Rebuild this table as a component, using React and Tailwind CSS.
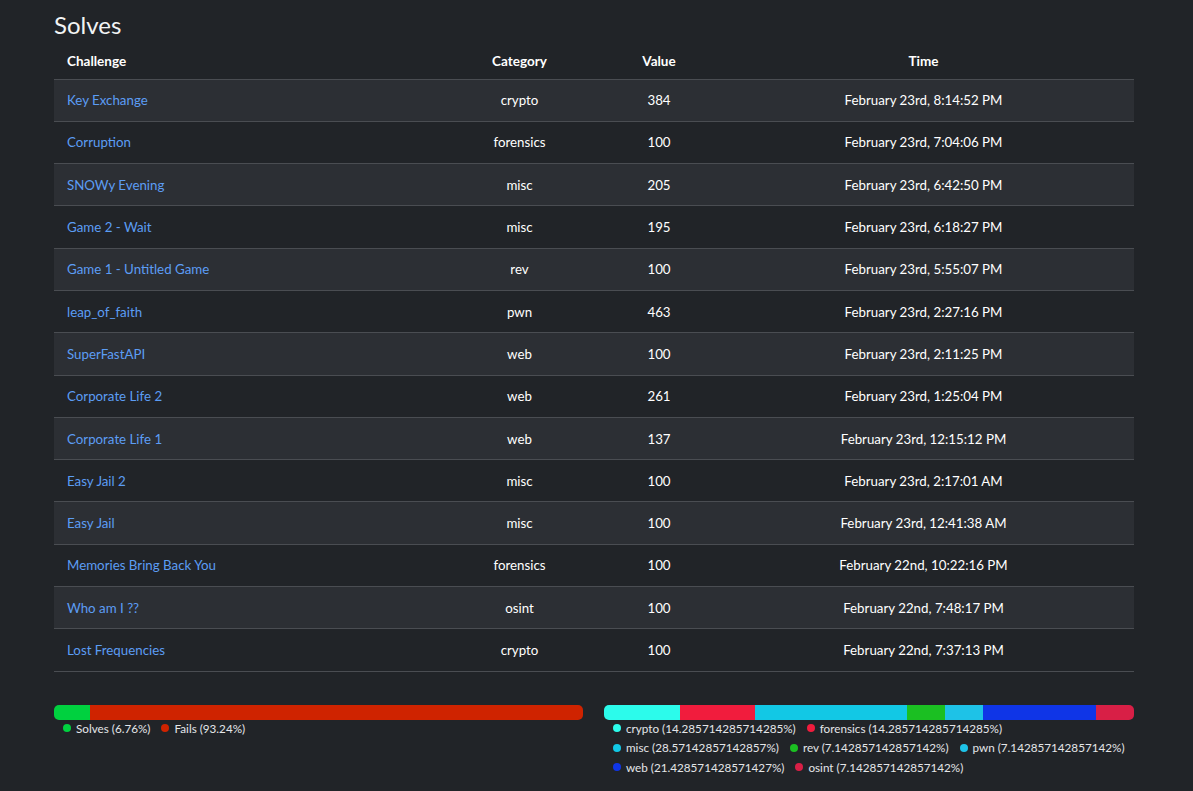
import React from 'react';

const SOLVES = [
  { name: 'Key Exchange', category: 'crypto', value: 384, time: 'February 23rd, 8:14:52 PM' },
  { name: 'Corruption', category: 'forensics', value: 100, time: 'February 23rd, 7:04:06 PM' },
  { name: 'SNOWy Evening', category: 'misc', value: 205, time: 'February 23rd, 6:42:50 PM' },
  { name: 'Game 2 - Wait', category: 'misc', value: 195, time: 'February 23rd, 6:18:27 PM' },
  { name: 'Game 1 - Untitled Game', category: 'rev', value: 100, time: 'February 23rd, 5:55:07 PM' },
  { name: 'leap_of_faith', category: 'pwn', value: 463, time: 'February 23rd, 2:27:16 PM' },
  { name: 'SuperFastAPI', category: 'web', value: 100, time: 'February 23rd, 2:11:25 PM' },
  { name: 'Corporate Life 2', category: 'web', value: 261, time: 'February 23rd, 1:25:04 PM' },
  { name: 'Corporate Life 1', category: 'web', value: 137, time: 'February 23rd, 12:15:12 PM' },
  { name: 'Easy Jail 2', category: 'misc', value: 100, time: 'February 23rd, 2:17:01 AM' },
  { name: 'Easy Jail', category: 'misc', value: 100, time: 'February 23rd, 12:41:38 AM' },
  { name: 'Memories Bring Back You', category: 'forensics', value: 100, time: 'February 22nd, 10:22:16 PM' },
  { name: 'Who am I ??', category: 'osint', value: 100, time: 'February 22nd, 7:48:17 PM' },
  { name: 'Lost Frequencies', category: 'crypto', value: 100, time: 'February 22nd, 7:37:13 PM' },
];

const SOLVE_RATIO = [
  { label: 'Solves (6.76%)', pct: 6.76, color: '#00d13f' },
  { label: 'Fails (93.24%)', pct: 93.24, color: '#cf2300' },
];

const CATEGORIES = [
  { label: 'crypto (14.285714285714285%)', pct: 14.285714285714285, color: '#2cfbeb' },
  { label: 'forensics (14.285714285714285%)', pct: 14.285714285714285, color: '#f11c3d' },
  { label: 'misc (28.57142857142857%)', pct: 28.57142857142857, color: '#12c8e5' },
  { label: 'rev (7.142857142857142%)', pct: 7.142857142857142, color: '#1bbf22' },
  { label: 'pwn (7.142857142857142%)', pct: 7.142857142857142, color: '#1ec2e7' },
  { label: 'web (21.428571428571427%)', pct: 21.428571428571427, color: '#0f35e7' },
  { label: 'osint (7.142857142857142%)', pct: 7.142857142857142, color: '#d81f46' },
];

function StackedBar({ parts }) {
  return (
    <div>
      <div className="flex h-[15px] w-full overflow-hidden rounded-[5px]">
        {parts.map((p) => (
          <div key={p.label} className="h-full" style={{ width: `${p.pct}%`, backgroundColor: p.color }} />
        ))}
      </div>
      <div className="-mt-[1px] flex flex-wrap gap-x-[11px] pl-[9px] text-[11.7px] leading-[19.5px] text-[#e4e6e8]">
        {parts.map((p) => (
          <div key={p.label} className="flex items-center gap-[5px]">
            <span className="inline-block h-[8px] w-[8px] rounded-full" style={{ backgroundColor: p.color }} />
            <span>{p.label}</span>
          </div>
        ))}
      </div>
    </div>
  );
}

export default function App() {
  return (
    <div
      className="min-h-[791px] bg-[#212428] pt-[10px] text-white"
      style={{ fontFamily: 'Lato, "Open Sans", sans-serif' }}
    >
      <div className="ml-[54px] w-[1080px]">
        <h1 className="text-[24px] leading-[29px] font-normal text-[#f2f3f4]">Solves</h1>

        {/* solves table */}
        <table className="w-full border-collapse text-[13.3px]">
          <thead>
            <tr className="h-[40px] border-b border-[#4a4d52] text-[13.5px] font-bold">
              <th className="w-[380px] pt-[4px] pr-3 pl-[13px] text-left">Challenge</th>
              <th className="w-[171px] px-3 pt-[4px] text-center">Category</th>
              <th className="w-[108px] px-3 pt-[4px] text-center">Value</th>
              <th className="px-3 pt-[4px] text-center">Time</th>
            </tr>
          </thead>
          <tbody>
            {SOLVES.map((s, i) => (
              <tr
                key={s.name}
                className={`h-[42.3px] border-b border-[#4a4d52] ${i % 2 === 0 ? 'bg-[#2c2f34]' : ''}`}
              >
                <td className="pt-[2px] pr-3 pl-[13px] text-[#5c9df4]">{s.name}</td>
                <td className="px-3 pt-[2px] text-center">{s.category}</td>
                <td className="px-3 pt-[2px] text-center">{s.value}</td>
                <td className="px-3 pt-[2px] text-center">{s.time}</td>
              </tr>
            ))}
          </tbody>
        </table>

        {/* stats bars */}
        <div className="mt-[33px] grid grid-cols-[529px_530px] gap-[21px]">
          <StackedBar parts={SOLVE_RATIO} />
          <StackedBar parts={CATEGORIES} />
        </div>
      </div>
    </div>
  );
}
